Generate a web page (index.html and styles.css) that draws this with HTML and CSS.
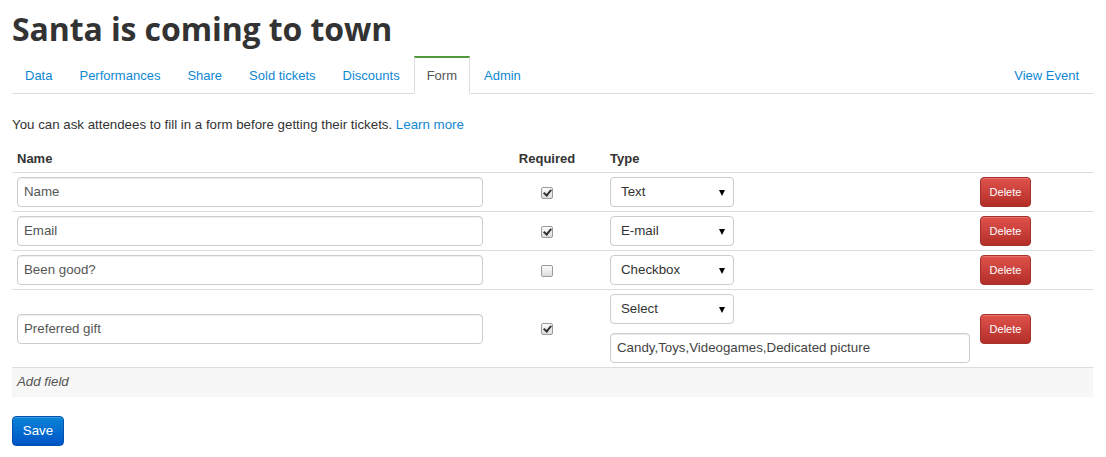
FILE: index.html
```html
<!DOCTYPE html>
<html>
<head>
<meta charset="utf-8">
<link rel="stylesheet" href="styles.css">
</head>
<body>
<div class="page">
  <h1 class="title">Santa is coming to town</h1>
  <ul class="tabs">
    <li><a href="#">Data</a></li>
    <li><a href="#">Performances</a></li>
    <li><a href="#">Share</a></li>
    <li><a href="#">Sold tickets</a></li>
    <li><a href="#">Discounts</a></li>
    <li class="active"><a href="#">Form</a></li>
    <li><a href="#">Admin</a></li>
    <li class="right"><a href="#">View Event</a></li>
  </ul>
  <p class="intro">You can ask attendees to fill in a form before getting their tickets. <a href="#">Learn more</a></p>
  <table class="fields">
    <colgroup>
      <col class="c-name"><col class="c-req"><col class="c-type"><col class="c-del">
    </colgroup>
    <thead>
      <tr><th>Name</th><th class="center">Required</th><th>Type</th><th></th></tr>
    </thead>
    <tbody>
      <tr>
        <td><div class="input name-input">Name</div></td>
        <td class="center"><span class="check on"></span></td>
        <td><div class="select">Text</div></td>
        <td><button class="btn-delete">Delete</button></td>
      </tr>
      <tr>
        <td><div class="input name-input">Email</div></td>
        <td class="center"><span class="check on"></span></td>
        <td><div class="select">E-mail</div></td>
        <td><button class="btn-delete">Delete</button></td>
      </tr>
      <tr>
        <td><div class="input name-input">Been good?</div></td>
        <td class="center"><span class="check"></span></td>
        <td><div class="select">Checkbox</div></td>
        <td><button class="btn-delete">Delete</button></td>
      </tr>
      <tr>
        <td><div class="input name-input">Preferred gift</div></td>
        <td class="center"><span class="check on"></span></td>
        <td>
          <div class="select">Select</div>
          <div class="input options-input">Candy,Toys,Videogames,Dedicated picture</div>
        </td>
        <td><button class="btn-delete">Delete</button></td>
      </tr>
      <tr class="add-row">
        <td colspan="4">Add field</td>
      </tr>
    </tbody>
  </table>
  <button class="btn-save">Save</button>
</div>
</body>
</html>
```
FILE: styles.css
```css
* { box-sizing: border-box; }
html, body { margin: 0; padding: 0; background: #fff; }
body {
  font-family: "Liberation Sans", Arial, Helvetica, sans-serif;
  font-size: 13px;
  line-height: 20px;
  color: #333;
}
a { color: #0e88d3; text-decoration: none; }
.page { padding: 0 12px 0 12px; width: 1105px; }
.title {
  margin: 0;
  padding-top: 9px;
  height: 56px;
  font-family: "Open Sans", "Liberation Sans", sans-serif;
  font-weight: 700;
  font-size: 32px;
  line-height: 40px;
  color: #333;
  letter-spacing: -0.1px;
}
.tabs {
  list-style: none;
  margin: 0;
  padding: 0;
  display: flex;
  border-bottom: 1px solid #ddd;
  width: 1081px;
}
.tabs li { margin-right: 1px; margin-bottom: -1px; }
.tabs li.right { margin-left: auto; margin-right: 0; }
.tabs a {
  display: block;
  padding: 8px 12px 7px 12px;
  line-height: 20px;
  border: 1px solid transparent;
  border-top-width: 2px;
}
.tabs li.right a { padding-right: 13px; }
.tabs li.active a {
  color: #555;
  background: #fff;
  border-color: #ddd;
  border-top-color: #4f9a3c;
  border-bottom-color: #fff;
}
.intro { margin: 21px 0 9px 0; font-size: 13.3px; }
.fields {
  width: 1081px;
  border-collapse: collapse;
  table-layout: fixed;
}
.c-name { width: 477px; }
.c-req { width: 116px; }
.c-type { width: 370px; }
.c-del { width: 118px; }
.fields th {
  text-align: left;
  font-weight: bold;
  padding: 5px 5px 3px 5px;
  height: 28px;
  line-height: 20px;
  color: #333;
}
.fields td {
  padding: 4px 5px;
  border-top: 1px solid #ddd;
  vertical-align: middle;
}
.fields .center { text-align: center; }
.input {
  height: 30px;
  border: 1px solid #ccc;
  border-radius: 4px;
  padding: 4px 6px;
  line-height: 20px;
  color: #555;
  background: #fff;
  font-size: 13.3px;
  box-shadow: inset 0 1px 1px rgba(0,0,0,0.075);
}
.name-input { width: 466px; }
.options-input { width: 360px; margin-top: 9px; color: #444; }
.select {
  position: relative;
  width: 124px;
  height: 30px;
  border: 1px solid #ccc;
  border-radius: 4px;
  padding: 4px 10px;
  line-height: 20px;
  color: #333;
  font-size: 13.3px;
  background: #fff;
}
.select::after {
  content: "";
  position: absolute;
  right: 8px;
  top: 12px;
  border-left: 3.5px solid transparent;
  border-right: 3.5px solid transparent;
  border-top: 6px solid #000;
}
.check {
  display: inline-block;
  width: 12px;
  height: 12px;
  border: 1px solid #9a9a9a;
  border-radius: 2px;
  background: linear-gradient(#fdfdfd, #dcdcdc);
  vertical-align: middle;
  position: relative;
  top: 0;
}
.check.on::after {
  content: "";
  position: absolute;
  left: 3px;
  top: 0px;
  width: 3px;
  height: 6px;
  border-right: 2px solid #333;
  border-bottom: 2px solid #333;
  transform: rotate(40deg);
}
.btn-delete {
  display: block;
  width: 51px;
  height: 30px;
  border: 1px solid #a5312b;
  border-radius: 4px;
  background: linear-gradient(#e0524c, #b32e28);
  color: #fff;
  font-family: "Liberation Sans", Arial, sans-serif;
  font-size: 11px;
  padding: 0;
  box-shadow: inset 0 1px 0 rgba(255,255,255,0.2);
}
.add-row td {
  background: #f7f7f7;
  font-style: italic;
  color: #555;
  padding: 4px 5px;
  height: 29px;
  line-height: 20px;
  font-size: 13.3px;
}
.btn-save {
  display: block;
  margin-top: 19px;
  width: 52px;
  height: 30px;
  border: 1px solid #0051b0;
  border-radius: 4px;
  background: linear-gradient(#0a84d6, #0054c6);
  color: #fff;
  font-family: "Liberation Sans", Arial, sans-serif;
  font-size: 13.3px;
  padding: 0;
  box-shadow: inset 0 1px 0 rgba(255,255,255,0.2);
}
```
